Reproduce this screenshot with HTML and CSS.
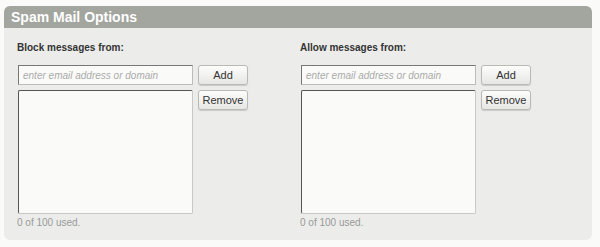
FILE: index.html
```html
<!DOCTYPE html>
<html lang="en">
<head>
    <meta charset="UTF-8">
    <title>Spam Mail Options</title>
    <link rel="stylesheet" href="styles.css">
</head>
<body>
    <div class="panel">
        <div class="panel-header">Spam Mail Options</div>
        <div class="panel-body">
            <div class="list-box">
                <h3>Block messages from:</h3>
                <div class="list-row">
                    <div class="list-fields">
                        <input type="text" class="entry" placeholder="enter email address or domain">
                        <select class="entries" multiple></select>
                    </div>
                    <div class="list-actions">
                        <button class="btn">Add</button>
                        <button class="btn">Remove</button>
                    </div>
                </div>
                <p class="usage">0 of 100 used.</p>
            </div>

            <div class="list-box">
                <h3>Allow messages from:</h3>
                <div class="list-row">
                    <div class="list-fields">
                        <input type="text" class="entry" placeholder="enter email address or domain">
                        <select class="entries" multiple></select>
                    </div>
                    <div class="list-actions">
                        <button class="btn">Add</button>
                        <button class="btn">Remove</button>
                    </div>
                </div>
                <p class="usage">0 of 100 used.</p>
            </div>
        </div>
    </div>
</body>
</html>
```

FILE: styles.css
```css
body {
    margin: 0;
    padding: 6px 8px 0 4px;
    background: #fafbf9;
    font-family: "Liberation Sans", Arial, sans-serif;
}

.panel {
    border-radius: 6px;
    background: #ecedea;
    height: 234px;
    overflow: hidden;
}

.panel-header {
    background: #a3a59f;
    color: white;
    font-weight: bold;
    font-size: 14px;
    height: 22px;
    line-height: 23px;
    padding-left: 7px;
}

.panel-body {
    display: flex;
    padding: 14px 0 0 13px;
}

.list-box {
    width: 283px;
}

.list-box h3 {
    margin: 0 0 12px 0;
    font-size: 10px;
    color: #333;
}

.list-row {
    display: flex;
    gap: 5px;
}

.list-fields {
    display: flex;
    flex-direction: column;
    gap: 5px;
    padding-left: 1px;
}

.entry {
    box-sizing: border-box;
    width: 175px;
    height: 20px;
    margin: 0;
    padding: 0 4px;
    border: 1px solid #bbb;
    border-top-color: #777;
    border-left-color: #777;
    background: #fafbf9;
    font-family: "Liberation Sans", Arial, sans-serif;
    font-size: 10px;
    outline: none;
}

.entry::placeholder {
    color: #aaa;
    font-style: italic;
}

.entries {
    box-sizing: border-box;
    width: 175px;
    height: 124px;
    margin: 0;
    border: 1px solid #c8c8c8;
    border-top-color: #555;
    border-left-color: #555;
    background: #fafbf9;
}

.list-actions {
    display: flex;
    flex-direction: column;
    gap: 5px;
}

.btn {
    box-sizing: border-box;
    width: 50px;
    height: 20px;
    margin: 0;
    padding: 0;
    border: 1px solid #b9b9b6;
    border-radius: 3px;
    background: linear-gradient(#fdfdfc, #e6e6e3);
    box-shadow: 0 1px 1px rgba(0, 0, 0, 0.15);
    color: #333;
    font-family: "Liberation Sans", Arial, sans-serif;
    font-size: 11px;
    cursor: pointer;
}

.usage {
    margin: 3px 0 0 0;
    font-size: 10px;
    color: #999;
}
```
